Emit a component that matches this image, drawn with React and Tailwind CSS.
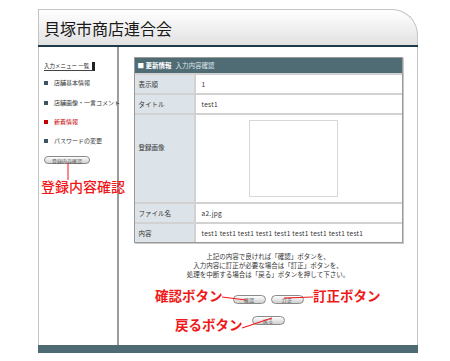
import React from 'react';

const rows = [
  { label: '表示順', value: '1' },
  { label: 'タイトル', value: 'test1' },
  { label: '登録画像', image: true },
  { label: 'ファイル名', value: 'a2.jpg' },
  { label: '内容', value: 'test1 test1 test1 test1 test1 test1 test1 test1 test1' },
];

const menu = [
  { label: '店舗基本情報', mt: 'mt-[8px]' },
  { label: '店舗画像・一言コメント', mt: 'mt-[12px]' },
  { label: '新着情報', mt: 'mt-[11px]', active: true },
  { label: 'パスワードの変更', mt: 'mt-[11px]' },
];

function PillButton({ children, className = '' }) {
  return (
    <div className={`h-[9px] w-[33px] rounded-full border border-[#8a8a8a] bg-gradient-to-b from-white to-[#cfcfcf] flex items-center justify-center text-[5px] leading-none text-[#555] ${className}`}>
      {children}
    </div>
  );
}

export default function App() {
  return (
    <div className="relative w-[450px] h-[361px] bg-white overflow-hidden font-['Noto_Sans_CJK_JP',sans-serif] text-[#333]">
      <div className="ml-[38px] pt-[9px] w-[380px]">
        {/* header */}
        <div className="h-[36px] rounded-tr-[26px] border border-b-0 border-[#c4c4c4] bg-gradient-to-b from-white to-[#e2e2e2] flex items-center pl-[5px] pt-[1px] text-[16px] leading-none text-[#1a1a1a]">
          貝塚市商店連合会
        </div>
        <div className="h-[2px] bg-[#1d3a4b]" />

        <div className="flex h-[298px] border-x border-[#c4c4c4]">
          {/* sidebar */}
          <div className="w-[80px] shrink-0 border-r-2 border-[#9c9c9c] flex flex-col pl-[5px]">
            <div className="mt-[15px] w-[51px] h-[9px] border-b border-[#444] border-r-[3px] border-r-[#222] flex items-end whitespace-nowrap text-[5.5px] leading-none pb-[1px] text-[#222]">
              入力メニュー 一覧
            </div>
            {menu.map((m) => (
              <div key={m.label} className={`${m.mt} h-[8px] flex items-center gap-[6px] whitespace-nowrap`}>
                <span className={`w-[4px] h-[4px] shrink-0 ${m.active ? 'bg-[#c40000]' : 'bg-[#3d5561]'}`} />
                <span className={`text-[6px] leading-none ${m.active ? 'text-[#c40000]' : 'text-[#333]'}`}>{m.label}</span>
              </div>
            ))}
            <div className="mt-[11px] h-[8px] w-[46px] rounded-full border border-[#8a8a8a] bg-gradient-to-b from-white to-[#d0d0d0] flex items-center justify-center text-[5px] leading-none text-[#555]">
              登録内容確認
            </div>
          </div>

          {/* main */}
          <div className="flex-1 flex flex-col items-center">
            <div className="mt-[10px] w-[269px] border border-[#9a9a9a] shadow-[1px_1px_0_#c9c9c9]">
              <div className="h-[15px] bg-[#4f6b74] flex items-center pl-[3px] text-[6.5px] leading-none text-white">
                <span className="font-bold">■ 更新情報</span>
                <span className="ml-[4px] text-[#dfe7ea]">入力内容確認</span>
              </div>
              {rows.map((r) => (
                <div key={r.label} className={`flex border-t-2 border-[#d2d2d2] ${r.image ? 'h-[89px]' : 'h-[20px]'}`}>
                  <div className={`w-[61px] shrink-0 bg-[#dde4e9] border-r-2 border-[#d2d2d2] flex pl-[4px] text-[6.5px] leading-none ${r.image ? 'items-start pt-[29px]' : 'items-center'}`}>
                    {r.label}
                  </div>
                  <div className={`flex-1 bg-white flex items-center text-[6.5px] leading-none ${r.image ? 'justify-center pr-[10px]' : 'pl-[6px] tracking-[0.3px]'}`}>
                    {r.image ? <div className="w-[89px] h-[77px] border border-[#d8d8d8] bg-white" /> : r.value}
                  </div>
                </div>
              ))}
            </div>

            <div className="mt-[9px] text-center text-[6.5px] leading-[9px] text-[#333]">
              <p>上記の内容で良ければ「確認」ボタンを、</p>
              <p>入力内容に訂正が必要な場合は「訂正」ボタンを、</p>
              <p>処理を中断する場合は「戻る」ボタンを押して下さい。</p>
            </div>

            <div className="mt-[16px] flex gap-[5px]">
              <PillButton>確認</PillButton>
              <PillButton>訂正</PillButton>
            </div>
            <PillButton className="mt-[12px]">戻る</PillButton>
          </div>
        </div>
        <div className="h-[8px] bg-[#4e6b74]" />
      </div>

      {/* annotations */}
      <svg className="absolute left-0 top-0 pointer-events-none" width="450" height="361">
        <line x1="68" y1="163" x2="68" y2="180" stroke="#f01818" strokeWidth="1" />
        <line x1="222" y1="297" x2="246" y2="300" stroke="#f01818" strokeWidth="1.2" />
        <line x1="284" y1="298" x2="313" y2="297" stroke="#f01818" strokeWidth="1.2" />
        <line x1="242" y1="328" x2="272" y2="318" stroke="#f01818" strokeWidth="1.2" />
      </svg>
      <div className="absolute left-[41px] top-[179px] text-[14px] leading-none font-medium text-[#f01818] whitespace-nowrap">登録内容確認</div>
      <div className="absolute left-[155px] top-[289px] text-[13.5px] leading-none font-bold text-[#f01818] whitespace-nowrap">確認ボタン</div>
      <div className="absolute left-[313px] top-[289px] text-[13.5px] leading-none font-bold text-[#f01818] whitespace-nowrap">訂正ボタン</div>
      <div className="absolute left-[175px] top-[318px] text-[13.5px] leading-none font-bold text-[#f01818] whitespace-nowrap">戻るボタン</div>
    </div>
  );
}
